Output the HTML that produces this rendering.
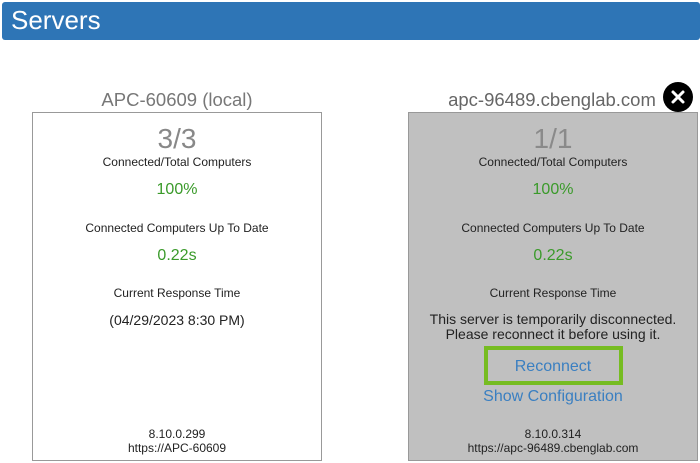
<!DOCTYPE html>
<html><head><style>
body{margin:0;width:700px;height:463px;background:#fff;font-family:"Liberation Sans",sans-serif;position:relative;overflow:hidden}
.a{position:absolute;text-align:center;white-space:nowrap}
.hdr{position:absolute;left:2px;top:2px;width:698px;height:38px;background:#2e75b6;border-radius:3px}
.card{position:absolute;top:112px;width:288px;height:347px;border:1px solid #999}
.t{color:#777;font-size:18.5px;width:290px}
.big{font-size:28px;color:#888;width:290px}
.s{font-size:12px;color:#222;width:290px}
.g{font-size:16px;color:#3a9a2a;width:290px}
.v{font-size:12px;color:#222;width:290px}
</style></head><body>
<div class="hdr"></div>
<div class="a" style="left:11px;top:5px;color:#fff;font-size:26px">Servers</div>

<div class="card" style="left:32px"></div>
<div class="a t" style="left:32px;top:89px">APC-60609 (local)</div>
<div class="a big" style="left:32px;top:123px">3/3</div>
<div class="a s" style="left:32px;top:155px">Connected/Total Computers</div>
<div class="a g" style="left:32px;top:181px">100%</div>
<div class="a s" style="left:32px;top:221px">Connected Computers Up To Date</div>
<div class="a g" style="left:32px;top:247px">0.22s</div>
<div class="a s" style="left:32px;top:286px">Current Response Time</div>
<div class="a" style="left:32px;top:312px;width:290px;font-size:14px;color:#222">(04/29/2023 8:30 PM)</div>
<div class="a v" style="left:32px;top:427px">8.10.0.299</div>
<div class="a v" style="left:32px;top:441px">https://APC-60609</div>

<div class="card" style="left:408px;background:#c0c0c0"></div>
<div class="a t" style="left:408px;top:89px;width:290px;color:#666;margin-left:-1px">apc-96489.cbenglab.com</div>
<div style="position:absolute;left:663px;top:82px;width:30px;height:30px;border-radius:50%;background:#000"></div>
<svg style="position:absolute;left:663px;top:82px" width="30" height="30"><path d="M10 10L20 20M20 10L10 20" stroke="#fff" stroke-width="3" stroke-linecap="round"/></svg>
<div class="a big" style="left:408px;top:123px;color:#8a8a8a">1/1</div>
<div class="a s" style="left:408px;top:155px">Connected/Total Computers</div>
<div class="a g" style="left:408px;top:181px">100%</div>
<div class="a s" style="left:408px;top:221px">Connected Computers Up To Date</div>
<div class="a g" style="left:408px;top:247px">0.22s</div>
<div class="a s" style="left:408px;top:286px">Current Response Time</div>
<div class="a" style="left:408px;top:312px;width:290px;font-size:14px;color:#222;line-height:15px">This server is temporarily disconnected.<br>Please reconnect it before using it.</div>
<div style="position:absolute;left:484px;top:346px;width:131px;height:31px;border:4px solid #76bc21"></div>
<div class="a" style="left:408px;top:358px;width:290px;font-size:16px;color:#3a7fc1">Reconnect</div>
<div class="a" style="left:408px;top:388px;width:290px;font-size:16px;color:#3a7fc1">Show Configuration</div>
<div class="a v" style="left:408px;top:427px">8.10.0.314</div>
<div class="a v" style="left:408px;top:441px">https://apc-96489.cbenglab.com</div>
</body></html>
